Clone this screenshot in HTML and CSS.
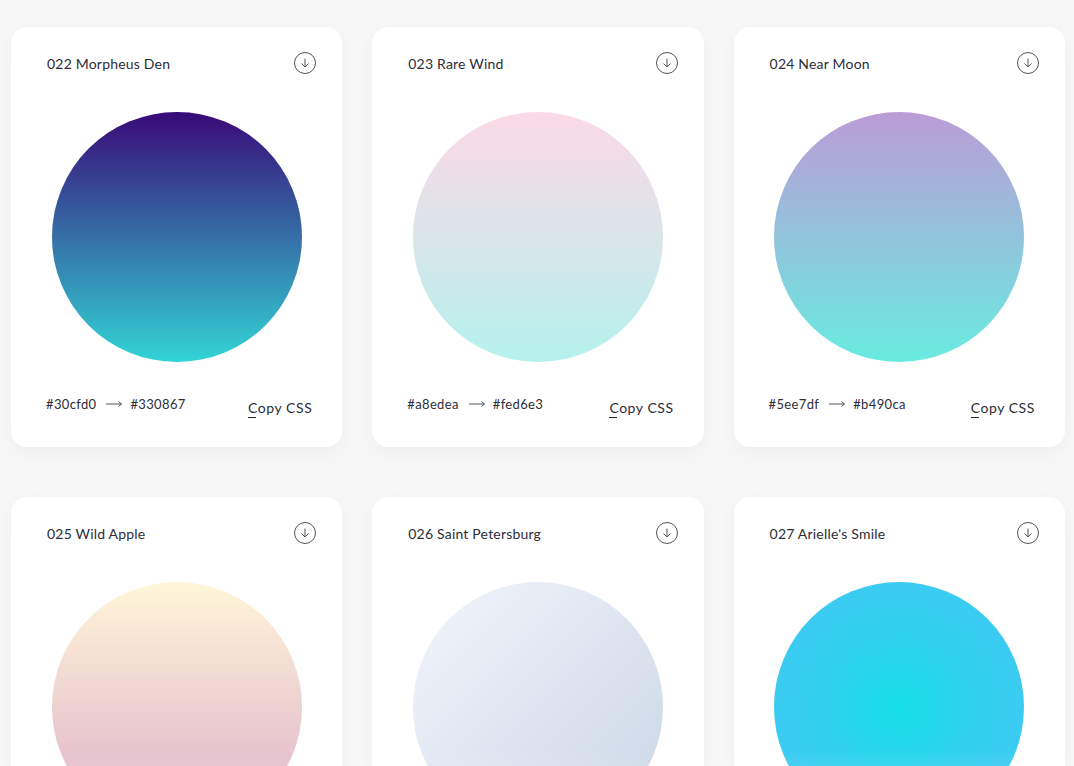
FILE: index.html
```html
<!DOCTYPE html>
<html lang="en">
<head>
<meta charset="utf-8">
<title>Gradients</title>
<link rel="stylesheet" href="styles.css">
</head>
<body>
<main class="grid">
  <article class="card">
    <header class="head"><h2 class="name">022 Morpheus Den</h2>
      <svg class="dl" viewBox="0 0 22 22"><circle cx="11" cy="11" r="10.5"/><path d="M11 6.5v8.5M7.5 11.5l3.5 3.5 3.5-3.5"/></svg></header>
    <div class="orb g22"></div>
    <footer class="foot"><div class="hex"><span>#30cfd0</span><svg class="arrow" viewBox="0 0 16 8"><path d="M0 4h15.5M12.5 1.5l3 2.5-3 2.5"/></svg><span>#330867</span></div><a class="copy">Copy CSS</a></footer>
  </article>
  <article class="card">
    <header class="head"><h2 class="name">023 Rare Wind</h2>
      <svg class="dl" viewBox="0 0 22 22"><circle cx="11" cy="11" r="10.5"/><path d="M11 6.5v8.5M7.5 11.5l3.5 3.5 3.5-3.5"/></svg></header>
    <div class="orb g23"></div>
    <footer class="foot"><div class="hex"><span>#a8edea</span><svg class="arrow" viewBox="0 0 16 8"><path d="M0 4h15.5M12.5 1.5l3 2.5-3 2.5"/></svg><span>#fed6e3</span></div><a class="copy">Copy CSS</a></footer>
  </article>
  <article class="card">
    <header class="head"><h2 class="name">024 Near Moon</h2>
      <svg class="dl" viewBox="0 0 22 22"><circle cx="11" cy="11" r="10.5"/><path d="M11 6.5v8.5M7.5 11.5l3.5 3.5 3.5-3.5"/></svg></header>
    <div class="orb g24"></div>
    <footer class="foot"><div class="hex"><span>#5ee7df</span><svg class="arrow" viewBox="0 0 16 8"><path d="M0 4h15.5M12.5 1.5l3 2.5-3 2.5"/></svg><span>#b490ca</span></div><a class="copy">Copy CSS</a></footer>
  </article>
  <article class="card">
    <header class="head"><h2 class="name">025 Wild Apple</h2>
      <svg class="dl" viewBox="0 0 22 22"><circle cx="11" cy="11" r="10.5"/><path d="M11 6.5v8.5M7.5 11.5l3.5 3.5 3.5-3.5"/></svg></header>
    <div class="orb g25"></div>
  </article>
  <article class="card">
    <header class="head"><h2 class="name">026 Saint Petersburg</h2>
      <svg class="dl" viewBox="0 0 22 22"><circle cx="11" cy="11" r="10.5"/><path d="M11 6.5v8.5M7.5 11.5l3.5 3.5 3.5-3.5"/></svg></header>
    <div class="orb g26"></div>
  </article>
  <article class="card">
    <header class="head"><h2 class="name">027 Arielle's Smile</h2>
      <svg class="dl" viewBox="0 0 22 22"><circle cx="11" cy="11" r="10.5"/><path d="M11 6.5v8.5M7.5 11.5l3.5 3.5 3.5-3.5"/></svg></header>
    <div class="orb g27"></div>
  </article>
</main>
<div class="fade"></div>
</body>
</html>
```
FILE: styles.css
```css
* { box-sizing: border-box; }
html, body { height: 100%; }
body {
  margin: 0;
  height: 766px;
  overflow: hidden;
  position: relative;
  background: #f7f7f7;
  font-family: "Lato", "Liberation Sans", sans-serif;
  color: #2d2d38;
}
.grid {
  display: grid;
  grid-template-columns: repeat(3, 331.3px);
  column-gap: 30px;
  row-gap: 50px;
  padding: 27px 0 0 11px;
}
.card {
  height: 420px;
  background: #fff;
  border-radius: 16px;
  box-shadow: 0 6px 20px rgba(0, 0, 0, 0.04);
  padding: 25px 26px 0 35px;
}
.head {
  display: flex;
  justify-content: space-between;
  align-items: flex-start;
  height: 60px;
}
.name {
  margin: 4px 0 0 1px;
  font-size: 14px;
  font-weight: 400;
  line-height: 16px;
  letter-spacing: 0.2px;
}
.dl { width: 22px; height: 22px; fill: none; stroke: #555; stroke-width: 1; }
.orb {
  width: 250px;
  height: 250px;
  border-radius: 50%;
  margin: 0 0 0 5.7px;
}
.g22 { background: linear-gradient(to top, #32d4d5, #390a78); }
.g23 { background: linear-gradient(to top, #b5f1ec 0%, #fcd9e7 100%); }
.g24 { background: linear-gradient(to top, #69ebe1, #bb9cd6); }
.g25 { background: linear-gradient(to bottom, #fff6d8 0%, #dcacc9 100%); }
.g26 { background: linear-gradient(135deg, #f3f5fb 0%, #c9d5e5 100%); }
.g27 { background: radial-gradient(circle closest-side, #16dfe8 0%, #2fd2ee 55%, #3ccbf2 100%); }
.foot {
  display: flex;
  justify-content: space-between;
  align-items: flex-start;
  padding-top: 34px;
  padding-right: 4px;
  font-size: 14px;
  line-height: 16px;
}
.hex { display: flex; align-items: center; gap: 9px; font-size: 13px; letter-spacing: 0.35px; }
.arrow { width: 16px; height: 8px; fill: none; stroke: #555; stroke-width: 1; margin: 0 -1px 0 1px; }
.copy {
  position: relative;
  margin-top: 4px;
  letter-spacing: 0.55px;
}
.copy::after {
  content: "";
  position: absolute;
  left: 0;
  bottom: -2px;
  width: 8px;
  height: 1px;
  background: #222;
}
.fade {
  position: absolute;
  left: 0;
  right: 0;
  bottom: 0;
  height: 16px;
  background: linear-gradient(to bottom, rgba(255,255,255,0), rgba(255,255,255,0.08));
}
```
